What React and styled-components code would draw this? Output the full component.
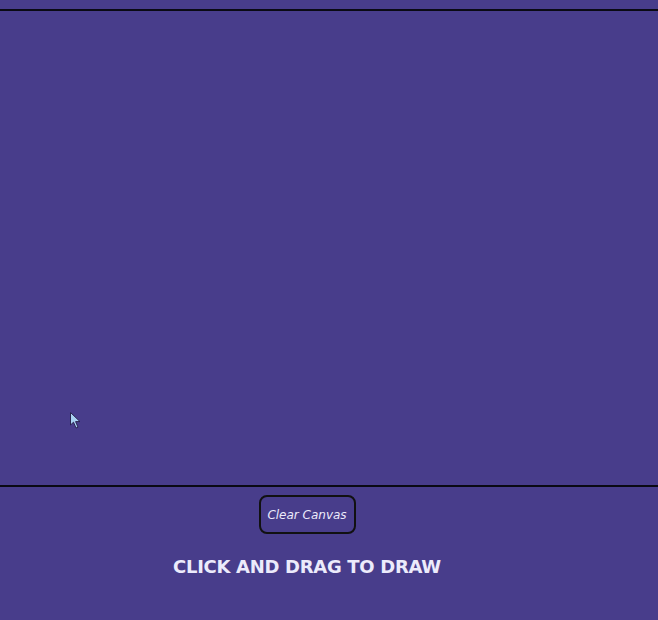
import React from 'react';
import styled, { createGlobalStyle } from 'styled-components';

const GlobalStyle = createGlobalStyle`
	html, body {
		margin: 0;
		padding: 0;
		background: #483d8b;
		overflow: hidden;
	}
	body {
		font-family: 'Comic Sans MS', 'DejaVu Sans', sans-serif;
	}
`;

const Page = styled.div`
	position: relative;
	width: 658px;
	height: 620px;
	padding-top: 9px;
	box-sizing: border-box;
`;

const Canvas = styled.div`
	height: 474px;
	margin: 0 -10px;
	border-top: 2px solid #0a0a14;
	border-bottom: 2px solid #0a0a14;
	background: #483d8b;
`;

const Controls = styled.div`
	width: 614px;
	display: flex;
	flex-direction: column;
	align-items: center;
	padding-top: 8px;
`;

const ClearButton = styled.button`
	width: 97px;
	height: 39px;
	border: 2px solid #111;
	border-radius: 8px;
	background: transparent;
	color: #ecebfb;
	font-family: 'DejaVu Sans', sans-serif;
	font-size: 12px;
	font-style: italic;
	padding: 0;
`;

const Hint = styled.h2`
	margin: 22px 0 0;
	color: #ecebfb;
	font-family: 'DejaVu Sans', sans-serif;
	font-size: 18px;
	font-weight: bold;
	letter-spacing: -0.3px;
`;

const Cursor = styled.svg`
	position: absolute;
	left: 70px;
	top: 412px;
`;

const App = () => (
	<Page>
		<GlobalStyle />
		<Canvas />
		<Controls>
			<ClearButton>Clear Canvas</ClearButton>
			<Hint>CLICK AND DRAG TO DRAW</Hint>
		</Controls>
		{/* mouse pointer left on the canvas */}
		<Cursor width="12" height="18" viewBox="0 0 12 18">
			<path
				d="M0.5 0.5 L0.5 13 L3.5 10.2 L6 16 L8 15.2 L5.6 9.6 L10 9.6 Z"
				fill="#a9d2f2"
				stroke="#2a2550"
				strokeWidth="1"
			/>
		</Cursor>
	</Page>
);

export default App;
